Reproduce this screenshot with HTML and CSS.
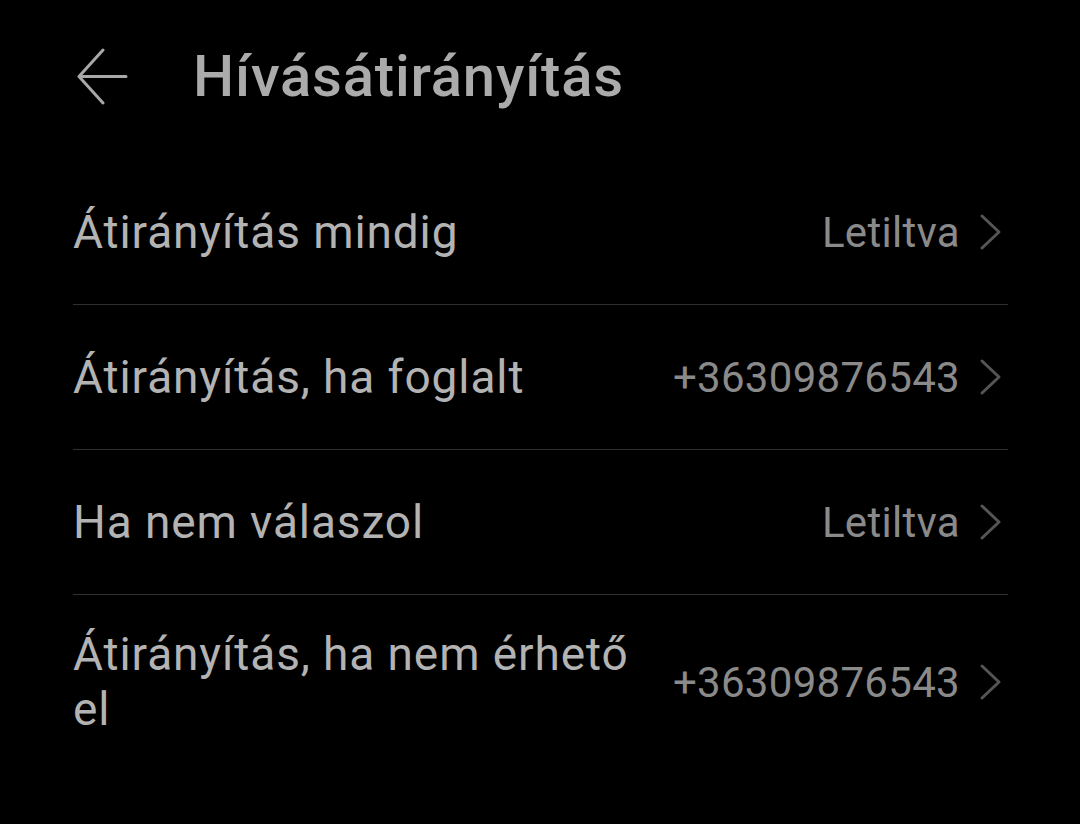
FILE: index.html
```html
<!DOCTYPE html>
<html lang="hu">
<head>
<meta charset="utf-8">
<title>Hívásátirányítás</title>
<link rel="stylesheet" href="styles.css">
</head>
<body>
<div class="screen">
  <header class="header">
    <svg class="back" width="51" height="57" viewBox="0 0 51 57" aria-hidden="true">
      <path d="M2 28.5 H49 M2 28.5 L26 2 M2 28.5 L26 55" fill="none" stroke="#a8a8a8" stroke-width="3" stroke-linecap="round" stroke-linejoin="round"/>
    </svg>
    <h1 class="title">Hívásátirányítás</h1>
  </header>
  <ul class="list">
    <li class="row">
      <span class="label">Átirányítás mindig</span>
      <span class="value">Letiltva</span>
      <svg class="chev" width="23" height="38" viewBox="0 0 23 38" aria-hidden="true"><path d="M3 3 L20 19 L3 35" fill="none" stroke="#555" stroke-width="3" stroke-linecap="round" stroke-linejoin="round"/></svg>
    </li>
    <li class="row">
      <span class="label">Átirányítás, ha foglalt</span>
      <span class="value">+36309876543</span>
      <svg class="chev" width="23" height="38" viewBox="0 0 23 38" aria-hidden="true"><path d="M3 3 L20 19 L3 35" fill="none" stroke="#555" stroke-width="3" stroke-linecap="round" stroke-linejoin="round"/></svg>
    </li>
    <li class="row">
      <span class="label">Ha nem válaszol</span>
      <span class="value">Letiltva</span>
      <svg class="chev" width="23" height="38" viewBox="0 0 23 38" aria-hidden="true"><path d="M3 3 L20 19 L3 35" fill="none" stroke="#555" stroke-width="3" stroke-linecap="round" stroke-linejoin="round"/></svg>
    </li>
    <li class="row">
      <span class="label">Átirányítás, ha nem érhető el</span>
      <span class="value">+36309876543</span>
      <svg class="chev" width="23" height="38" viewBox="0 0 23 38" aria-hidden="true"><path d="M3 3 L20 19 L3 35" fill="none" stroke="#555" stroke-width="3" stroke-linecap="round" stroke-linejoin="round"/></svg>
    </li>
  </ul>
</div>
</body>
</html>
```
FILE: styles.css
```css
html, body {
  margin: 0;
  padding: 0;
  background: #000;
}
body {
  font-family: Roboto, "Noto Sans", "Liberation Sans", sans-serif;
  color: #b0b0b0;
}
.screen {
  width: 1080px;
  height: 824px;
  overflow: hidden;
}
.header {
  display: flex;
  align-items: center;
  height: 152px;
  padding-left: 77px;
  box-sizing: border-box;
}
.back {
  display: block;
  flex: none;
}
.title {
  margin: 0 0 0 65px;
  font-size: 58px;
  font-weight: 500;
  letter-spacing: 0.8px;
  color: #ababab;
  line-height: 1;
}
.list {
  list-style: none;
  margin: 0;
  padding: 8px 72px 0 73px;
}
.row {
  display: flex;
  align-items: center;
  min-height: 145px;
  box-sizing: border-box;
  padding: 32px 6px 32px 0;
  border-bottom: 1px solid #303030;
}
.row:last-child {
  border-bottom: none;
}
.label {
  flex: 1;
  min-width: 0;
  font-size: 46px;
  letter-spacing: 0.9px;
  line-height: 55px;
  color: #b3b3b3;
}
.value {
  margin-left: 36px;
  font-size: 42px;
  letter-spacing: 0.3px;
  color: #8a8a8a;
  white-space: nowrap;
}
.chev {
  display: block;
  flex: none;
  margin-left: 19px;
}
```
